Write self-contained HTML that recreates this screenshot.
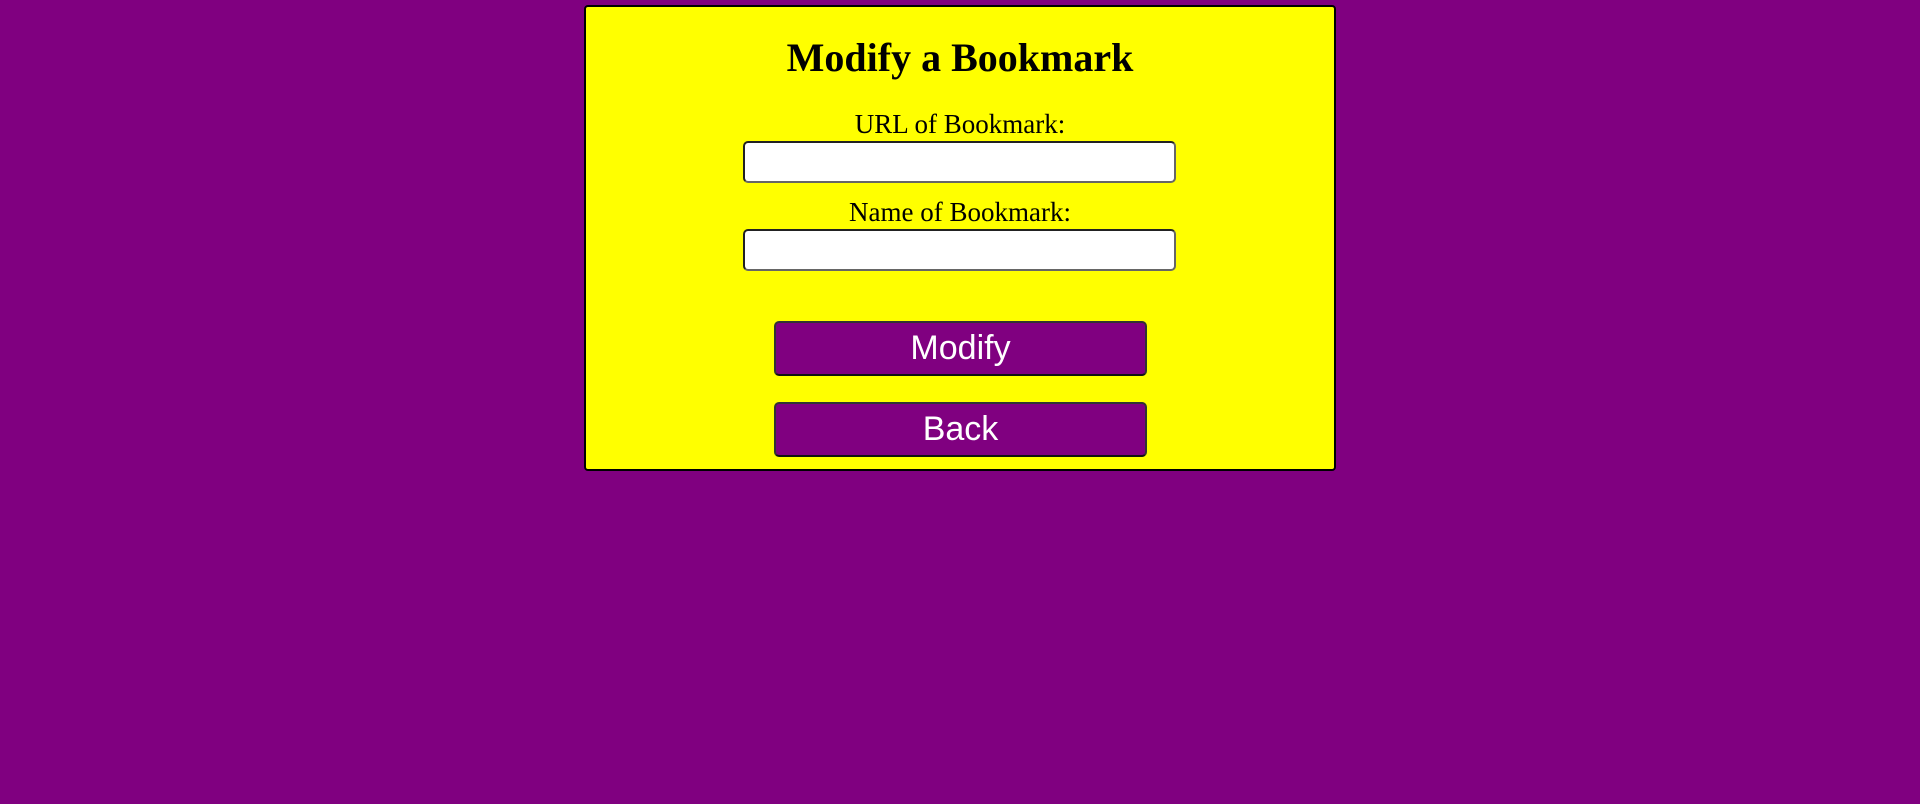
<!DOCTYPE html>
<html><head><style>
html,body{margin:0;padding:0;background:#800080;width:1920px;height:804px;overflow:hidden}
.box{position:absolute;left:584px;top:5px;width:748px;height:462px;background:#ff0;border:2px solid #000;border-radius:4px}
.t{position:absolute;left:0;width:1920px;text-align:center;font-family:"Liberation Serif",serif;color:#000}
h1{position:absolute;left:0;width:1920px;top:32px;margin:0;text-align:center;font:bold 40px/52px "Liberation Serif",serif}
.lab{font-size:27px;line-height:30px}
.in{position:absolute;left:743px;width:429px;height:38px;background:#fff;border:2px solid #222;border-bottom-color:#666;border-right-color:#666;border-radius:5px}
.btn{position:absolute;left:774px;width:369px;height:51px;background:#800080;border:2px solid #333;border-bottom-color:#111;border-radius:5px;color:#fff;font:34px/51px "Liberation Sans",sans-serif;text-align:center}
</style></head><body>
<div class="box"></div>
<h1>Modify a Bookmark</h1>
<div class="t lab" style="top:109px">URL of Bookmark:</div>
<div class="in" style="top:141px"></div>
<div class="t lab" style="top:197px">Name of Bookmark:</div>
<div class="in" style="top:229px"></div>
<div class="btn" style="top:321px">Modify</div>
<div class="btn" style="top:402px">Back</div>
</body></html>
